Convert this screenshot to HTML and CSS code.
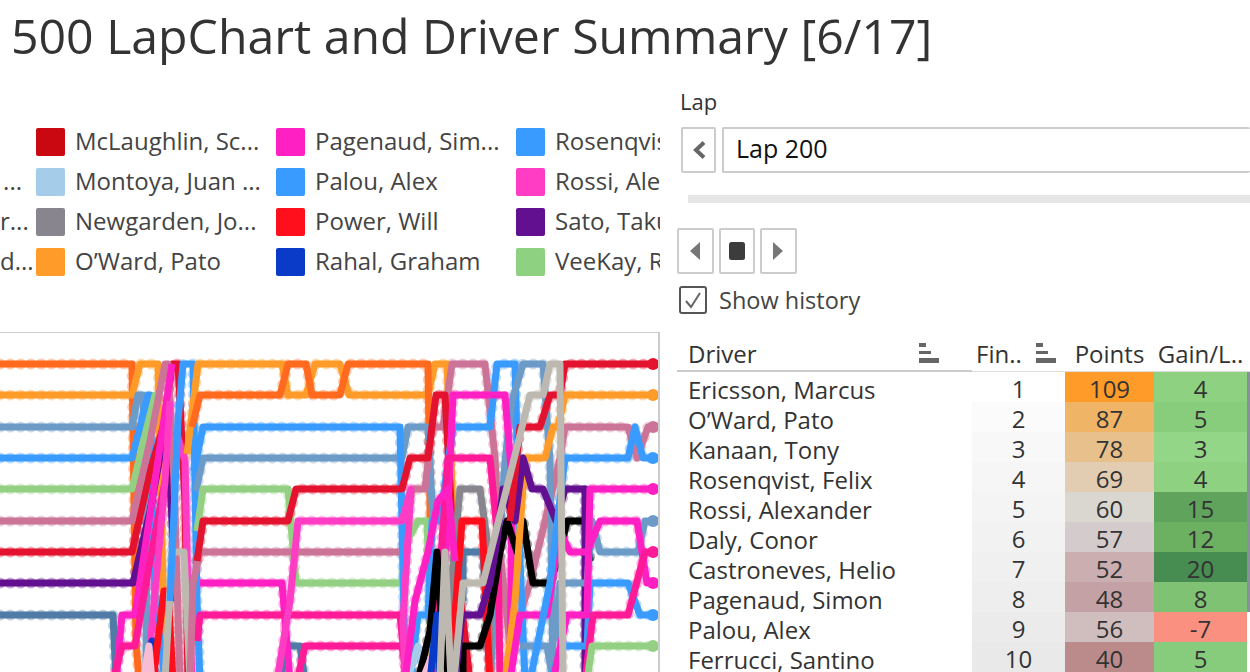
FILE: index.html
```html
<!DOCTYPE html>
<html lang="en">
<head>
  <meta charset="UTF-8" />
  <title>500 LapChart and Driver Summary</title>
  <link rel="stylesheet" href="styles.css">
</head>
<body>

  <h1 class="title">500 LapChart and Driver Summary [6/17]</h1>

  <div class="dashboard">

    <!-- Left: legend and lap chart -->
    <div class="left">
      <div class="legend">
        <div class="legend-stub">
          <span></span>
          <span>...</span>
          <span>r...</span>
          <span>d...</span>
        </div>
        <div class="legend-col">
          <div class="legend-item"><i style="background:#c90812"></i>McLaughlin, Sc...</div>
          <div class="legend-item"><i style="background:#a5cde9"></i>Montoya, Juan ...</div>
          <div class="legend-item"><i style="background:#88858f"></i>Newgarden, Jo...</div>
          <div class="legend-item"><i style="background:#ff9b28"></i>O’Ward, Pato</div>
        </div>
        <div class="legend-col">
          <div class="legend-item"><i style="background:#ff20c4"></i>Pagenaud, Sim...</div>
          <div class="legend-item"><i style="background:#3a9bff"></i>Palou, Alex</div>
          <div class="legend-item"><i style="background:#ff0f1c"></i>Power, Will</div>
          <div class="legend-item"><i style="background:#0a3ac8"></i>Rahal, Graham</div>
        </div>
        <div class="legend-col">
          <div class="legend-item"><i style="background:#3a9bff"></i>Rosenqvist, Felix</div>
          <div class="legend-item"><i style="background:#ff3cc4"></i>Rossi, Alexander</div>
          <div class="legend-item"><i style="background:#621090"></i>Sato, Takuma</div>
          <div class="legend-item"><i style="background:#8ed181"></i>VeeKay, Rinus</div>
        </div>
      </div>

      <div class="chart">
        <svg width="658" height="340" viewBox="0 332 658 340">
          <defs>
            <g id="laps">
              <polyline class="c-dorange" points="0,363 132,363 134,500 136,640 139,680"/>
              <polyline class="c-orange" points="0,394 132,394 140,363 158,363 162,540 165,680"/>
              <polyline class="c-steel" points="0,426 132,426 138,394 143,394 147,500 146,680"/>
              <polyline class="c-slate" points="0,614 113,614 116,680"/>
              <polyline class="c-blue" points="0,457 132,457 148,394 150,394 155,600 165,680"/>
              <polyline class="c-green" points="0,488 132,488 147,426 155,394 160,394"/>
              <polyline class="c-crimson" points="0,551 132,551 150,470 165,420 172,363 178,363 185,500 188,680"/>
              <polyline class="c-purple" points="0,582 133,582 150,510 163,440 167,420 172,520 176,600"/>
              <polyline class="c-mauve" points="0,520 132,520 150,440 165,363 168,363 174,480 180,680"/>
              <polyline class="c-magenta" points="116,680 122,614 135,614 155,480 172,363"/>
              <polyline class="c-deep" points="113,680 122,645 135,645 150,560 165,480"/>
              <polyline class="c-hot" points="147,680 165,480 170,400"/>
              <polyline class="c-hot" points="176,430 185,460 187,560 192,680"/>
              <polyline class="c-rahal" points="145,680 152,640 155,680"/>
              <polyline class="c-red" points="153,680 164,590 168,590 173,680"/>
              <polyline class="c-lpink" points="143,680 149,645 152,680"/>
              <polyline class="c-grey" points="165,680 172,551 184,551 190,680"/>
              <polyline class="c-blue" points="170,600 178,420 183,363 193,363 197,600 200,680"/>

              <!-- after the early pit stops -->
              <polyline class="c-orange" points="187,453 198,363 282,363 288,394 306,394 315,363 340,363 349,394 428,394 435,363 447,363 455,560 460,680"/>
              <polyline class="c-dorange" points="192,426 200,394 280,394 288,363 306,363 312,394 340,394 348,363 428,363 430,500 432,680"/>
              <polyline class="c-steel" points="196,490 203,457 402,457 408,426 428,426 433,520"/>
              <polyline class="c-green" points="197,530 203,488 288,488 296,582 402,582 407,540 418,520 427,520 430,600 433,680"/>
              <polyline class="c-slate" points="280,680 287,645 300,645 305,680"/>
              <polyline class="c-magenta" points="200,582 282,582 290,680"/>
              <polyline class="c-deep" points="197,640 200,614 400,614 407,680"/>
              <polyline class="c-deep" points="297,680 305,645 402,645 408,680"/>
              <polyline class="c-mauve" points="190,680 193,582 200,551 402,551 412,488 425,488 432,426 443,426 452,363 485,363 495,457 500,550 510,645 530,582 545,520 560,457 565,426 628,426 637,457 648,426 658,426"/>
              <polyline class="c-blue" points="194,470 203,426 400,426 404,620 407,680"/>
              <polyline class="c-crimson" points="197,560 203,520 288,520 296,488 402,488 410,457 428,457 436,394 445,394 452,520 470,680"/>
              <polyline class="c-hot" points="277,680 290,600 298,520 402,520 411,488 403,620 405,680"/>
              <polyline class="c-blue" points="410,680 418,614 428,614 432,520 440,520 453,426 490,426 497,363 515,363 520,560 525,680"/>
              <polyline class="c-steel" points="490,680 505,460 512,400 523,363 543,363 550,460 553,680"/>
              <polyline class="c-slate" points="463,600 463,551 483,551 490,680"/>
              <polyline class="c-lblue" points="407,680 418,645 425,680"/>
              <polyline class="c-gray" points="448,620 460,488 480,488 490,560 490,680"/>
              <polyline class="c-magenta" points="440,680 453,394 505,394 512,480 510,680"/>
              <polyline class="c-deep" points="432,680 448,457 490,457 498,540 500,680"/>
              <polyline class="c-red" points="450,680 462,520 482,520 490,680"/>
              <polyline class="c-magenta" points="405,680 415,600 428,551 438,500 448,488 455,560"/>
              <polyline class="c-black" points="418,680 430,630 437,551 445,680"/>
              <polyline class="c-lpink" points="422,680 436,645 442,680"/>
              <polyline class="c-rahal" points="430,680 437,614 440,680"/>
              <polyline class="c-grey" points="439,700 445,551 452,700"/>
              <polyline class="c-black" points="463,680 463,645 480,645 490,614 500,551 507,520 517,551 523,520 533,582 550,582 560,551 567,520 585,520 590,560"/>
              <polyline class="c-orange" points="505,680 515,600 525,457 545,457 553,426 558,426 565,394 658,394"/>
              <polyline class="c-purple" points="455,680 462,614 480,614 490,582 497,540 503,488 515,520 523,457 532,488 543,488 556,520 565,488 585,488 585,680"/>
              <polyline class="c-steel" points="520,645 547,645 553,680"/>
              <polyline class="c-steel" points="555,640 560,582 587,582 592,520 600,551 638,551 645,520 658,520"/>
              <polyline class="c-magenta" points="510,680 520,614 547,614 560,530 570,551 587,551 600,520 637,520 647,582 658,582"/>
              <polyline class="c-blue" points="530,680 550,582 565,457 628,457 635,426 643,457 658,457"/>
              <polyline class="c-blue" points="550,680 563,645 587,645 590,582 628,582 640,614 658,614"/>
              <polyline class="c-crimson" points="510,520 520,426 540,426 550,394 560,394 565,363 658,363"/>
              <polyline class="c-magenta" points="553,680 567,614 587,614 590,488 658,488"/>
              <polyline class="c-deep" points="585,680 593,614 628,614 645,551 658,551"/>
              <polyline class="c-grey" points="452,700 463,582 483,582 530,394 543,394 550,363 560,363 563,680"/>
              <polyline class="c-green" points="587,680 592,645 658,645"/>
            </g>
          </defs>
          <use href="#laps" class="lap-dots"/>
          <use href="#laps" class="lap-lines"/>
          <circle class="f-crimson" cx="653" cy="363" r="6"/>
          <circle class="f-orange" cx="653" cy="394" r="6"/>
          <circle class="f-mauve" cx="653" cy="426" r="6"/>
          <circle class="f-blue" cx="653" cy="457" r="6"/>
          <circle class="f-magenta" cx="653" cy="488" r="6"/>
          <circle class="f-steel" cx="653" cy="520" r="6"/>
          <circle class="f-deep" cx="653" cy="551" r="6"/>
          <circle class="f-magenta" cx="653" cy="582" r="6"/>
          <circle class="f-blue" cx="653" cy="614" r="6"/>
          <circle class="f-green" cx="653" cy="645" r="6"/>
        </svg>
      </div>
    </div>

    <!-- Right: lap filter and driver table -->
    <div class="right">
      <div class="filter-label">Lap</div>
      <div class="lap-select">
        <button class="arrow-btn">
          <svg width="14" height="18" viewBox="0 0 14 18"><path d="M12 1.5 L4 9 L12 16.5" fill="none" stroke="#666" stroke-width="4"/></svg>
        </button>
        <div class="lap-value">Lap 200</div>
      </div>
      <div class="slider"></div>

      <div class="player">
        <button class="play-btn"><svg width="14" height="20" viewBox="0 0 14 20"><path d="M12 1 V19 L2 10 Z" fill="#777"/></svg></button>
        <button class="play-btn"><svg width="18" height="20" viewBox="0 0 18 20"><rect x="1" y="1" width="16" height="18" rx="2.5" fill="#3c3c3c"/></svg></button>
        <button class="play-btn"><svg width="14" height="20" viewBox="0 0 14 20"><path d="M2 1 V19 L12 10 Z" fill="#777"/></svg></button>
      </div>

      <label class="history">
        <span class="check">
          <svg width="18" height="18" viewBox="0 0 18 18"><path d="M2 10 L7 16 L16 2" fill="none" stroke="#666" stroke-width="2"/></svg>
        </span>
        Show history
      </label>

      <div class="summary">
        <div class="head head-driver">Driver
          <svg class="sort" width="20" height="20" viewBox="0 0 20 20"><path d="M0 0h7v4H0zM0 8h12v3H0zM0 15h20v5H0z" fill="#666"/></svg>
        </div>
        <div class="head head-fin">Fin..
          <svg class="sort" width="20" height="20" viewBox="0 0 20 20"><path d="M0 0h7v4H0zM0 8h12v3H0zM0 15h20v5H0z" fill="#666"/></svg>
        </div>
        <div class="head head-num">Points</div>
        <div class="head head-num">Gain/L..</div>
        <div class="head"></div>

        <div class="name">Ericsson, Marcus</div><div class="cell" style="background:#ffffff">1</div><div class="cell" style="background:#ff9b28">109</div><div class="cell" style="background:#8ed181">4</div>
        <div class="name">O’Ward, Pato</div><div class="cell" style="background:#fbfbfb">2</div><div class="cell" style="background:#efb466">87</div><div class="cell" style="background:#87cd7b">5</div>
        <div class="name">Kanaan, Tony</div><div class="cell" style="background:#f8f8f8">3</div><div class="cell" style="background:#e8c08c">78</div><div class="cell" style="background:#94d688">3</div>
        <div class="name">Rosenqvist, Felix</div><div class="cell" style="background:#f6f6f6">4</div><div class="cell" style="background:#e2cdb3">69</div><div class="cell" style="background:#8ed181">4</div>
        <div class="name">Rossi, Alexander</div><div class="cell" style="background:#f4f4f4">5</div><div class="cell" style="background:#dad6d0">60</div><div class="cell" style="background:#5fa35c">15</div>
        <div class="name">Daly, Conor</div><div class="cell" style="background:#f2f2f2">6</div><div class="cell" style="background:#d4cccc">57</div><div class="cell" style="background:#6cb062">12</div>
        <div class="name">Castroneves, Helio</div><div class="cell" style="background:#f0f0f0">7</div><div class="cell" style="background:#caaeb0">52</div><div class="cell" style="background:#478c50">20</div>
        <div class="name">Pagenaud, Simon</div><div class="cell" style="background:#eeeeee">8</div><div class="cell" style="background:#c4a1a5">48</div><div class="cell" style="background:#7fc273">8</div>
        <div class="name">Palou, Alex</div><div class="cell" style="background:#ebebeb">9</div><div class="cell" style="background:#d0bebf">56</div><div class="cell" style="background:#fa907f">-7</div>
        <div class="name">Ferrucci, Santino</div><div class="cell" style="background:#e9e9e9">10</div><div class="cell" style="background:#bb8b8b">40</div><div class="cell" style="background:#87cc7c">5</div>
        <div class="scrollbar"></div>
      </div>
    </div>
  </div>

</body>
</html>
```
FILE: styles.css
```css
html, body {
  margin: 0; padding: 0; height: 100%;
  font-family: "Open Sans", Arial, sans-serif;
  overflow: hidden;
  background: #fff;
  color: #333;
}
.title {
  margin: 0;
  padding: 5px 0 0 11px;
  height: 80px;
  box-sizing: border-box;
  font-size: 48.2px;
  line-height: 60px;
  font-weight: 400;
  white-space: nowrap;
}
.dashboard {
  display: flex;
}
.left {
  width: 660px;
  flex: none;
}
.right {
  flex: 1;
  min-width: 0;
  padding-left: 17px;
  overflow: hidden;
}

/* Legend */
.legend {
  display: flex;
  height: 252px;
  padding-top: 48px;
  box-sizing: border-box;
  overflow: hidden;
  font-size: 24px;
  color: #444;
}
.legend-stub {
  width: 36px;
  flex: none;
  display: flex;
  flex-direction: column;
  gap: 12px;
  text-align: right;
  padding-right: 14px;
  box-sizing: border-box;
}
.legend-stub span {
  height: 28px;
  line-height: 26px;
}
.legend-col {
  width: 240px;
  flex: none;
  display: flex;
  flex-direction: column;
  gap: 12px;
}
.legend-item {
  display: flex;
  align-items: center;
  height: 28px;
  line-height: 26px;
  padding-bottom: 2px;
  box-sizing: border-box;
  white-space: nowrap;
}
.legend-item i {
  width: 29px;
  height: 28px;
  margin: 0 10px -2px 0;
  border-radius: 2px;
  flex: none;
}

/* Lap chart */
.chart {
  width: 660px;
  height: 340px;
  box-sizing: border-box;
  border-top: 1px solid #ccc;
  border-right: 2px solid #ccc;
  overflow: hidden;
}
.chart svg {
  display: block;
}
.lap-lines {
  fill: none;
  stroke-width: 7;
  stroke-linejoin: round;
}
.lap-dots {
  fill: none;
  stroke-width: 11;
  stroke-linecap: round;
  stroke-dasharray: 0 10.3;
  stroke-opacity: .35;
}
.c-dorange { stroke: #ff6a1f; }
.c-orange { stroke: #ff9b28; }
.c-steel { stroke: #6c9bc8; }
.c-slate { stroke: #4f7ba6; }
.c-blue { stroke: #3a9bff; }
.c-lblue { stroke: #a5cde9; }
.c-green { stroke: #93d083; }
.c-crimson { stroke: #e3122f; }
.c-red { stroke: #ff0f1c; }
.c-purple { stroke: #621090; }
.c-mauve { stroke: #cc7497; }
.c-magenta { stroke: #ff20c4; }
.c-hot { stroke: #ff3cc4; }
.c-deep { stroke: #ff1a98; }
.c-rahal { stroke: #0a3ac8; }
.c-lpink { stroke: #f8bcd4; }
.c-grey { stroke: #bdb8b0; }
.c-gray { stroke: #88858f; }
.c-black { stroke: #000; }
.f-crimson { fill: #e3122f; }
.f-orange { fill: #ff9b28; }
.f-mauve { fill: #cc7497; }
.f-blue { fill: #3a9bff; }
.f-magenta { fill: #ff20c4; }
.f-steel { fill: #6c9bc8; }
.f-deep { fill: #ff1a98; }
.f-green { fill: #93d083; }

/* Lap filter */
.filter-label {
  font-size: 22px;
  line-height: 28px;
  margin: 7px 0 12px 3px;
  color: #333;
}
.lap-select {
  display: flex;
  gap: 6px;
  margin-left: 4px;
  height: 46px;
}
button {
  padding: 0;
  background: #fff;
  border: 2px solid #ccc;
  border-radius: 2px;
  display: flex;
  align-items: center;
  justify-content: center;
}
.arrow-btn {
  width: 35px;
  flex: none;
}
.lap-value {
  flex: 1;
  border: 2px solid #ccc;
  border-right: none;
  border-radius: 2px;
  padding-left: 12px;
  font-size: 25px;
  line-height: 38px;
  color: #111;
}
.slider {
  height: 8px;
  margin: 22px 0 25px 11px;
  background: #e6e6e6;
}
.player {
  display: flex;
  gap: 5px;
  height: 46px;
}
.play-btn {
  width: 36.5px;
}
.history {
  display: flex;
  align-items: center;
  height: 30px;
  margin: 11px 0 0 2px;
  font-size: 23.5px;
  color: #444;
}
.check {
  width: 28px;
  height: 28px;
  box-sizing: border-box;
  border: 2px solid #555;
  border-radius: 3px;
  margin-right: 12px;
  display: flex;
  align-items: center;
  justify-content: center;
}

/* Driver table */
.summary {
  position: relative;
  display: grid;
  grid-template-columns: 295px 93px 89px 93px 3px;
  grid-template-rows: 42px;
  grid-auto-rows: 30px;
  margin-top: 15px;
  font-size: 24px;
  color: #333;
}
.head {
  line-height: 47px;
  white-space: nowrap;
  border-bottom: 1px solid #ddd;
  box-sizing: border-box;
  position: relative;
}
.head-driver {
  padding-left: 11px;
  border-bottom: 2px solid #ccc;
}
.head-fin {
  padding-left: 4px;
}
.head-num {
  text-align: center;
}
.sort {
  position: absolute;
  top: 13px;
  right: 33px;
}
.head-fin .sort {
  right: 9px;
}
.name {
  grid-column: 1;
  padding-left: 11px;
  line-height: 35px;
  white-space: nowrap;
}
.cell {
  text-align: center;
  line-height: 34px;
  overflow: hidden;
}
.scrollbar {
  position: absolute;
  right: 0;
  top: 42px;
  width: 3px;
  height: 240px;
  background: #88909c;
}
```
